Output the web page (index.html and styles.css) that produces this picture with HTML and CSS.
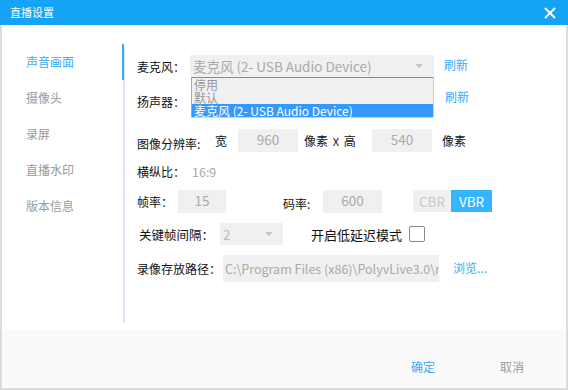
FILE: index.html
```html
<!DOCTYPE html>
<html>
<head>
<meta charset="utf-8">
<link rel="stylesheet" href="styles.css">
</head>
<body>
<div class="window">
  <div class="titlebar">
    <span class="title">直播设置</span>
    <svg class="close" width="12" height="12" viewBox="0 0 12 12"><path d="M1 1L11 11M11 1L1 11" stroke="#fff" stroke-width="2"/></svg>
  </div>
  <div class="main">
    <div class="sidebar">
      <div class="nav active">声音画面</div>
      <div class="nav">摄像头</div>
      <div class="nav">录屏</div>
      <div class="nav">直播水印</div>
      <div class="nav">版本信息</div>
    </div>
    <div class="divider"><div class="indicator"></div></div>
    <div class="content">
      <div class="row r1">
        <span class="lbl w53">麦克风：</span>
        <div class="select mic">
          <span class="sel-text">麦克风 (2- USB Audio Device)</span>
          <span class="arrow"></span>
          <div class="dropdown">
            <div class="opt">停用</div>
            <div class="opt">默认</div>
            <div class="opt on">麦克风 (2- USB Audio Device)</div>
          </div>
        </div>
        <span class="link refresh">刷新</span>
      </div>
      <div class="row r2">
        <span class="lbl w53 spk">扬声器：</span>
        <div class="select-ghost"></div>
        <span class="link refresh2">刷新</span>
      </div>
      <div class="row r3">
        <span class="lbl w78 low">图像分辨率:</span>
        <span class="txt">宽</span>
        <div class="box b960">960</div>
        <span class="txt px">像素 <span class="x">X</span> 高</span>
        <div class="box b540">540</div>
        <span class="txt px2">像素</span>
      </div>
      <div class="row r4">
        <span class="lbl w55">横纵比：</span>
        <span class="gray">16:9</span>
      </div>
      <div class="row r5">
        <span class="lbl w41">帧率：</span>
        <div class="box b15">15</div>
        <span class="lbl w40 rate low">码率:</span>
        <div class="box b600">600</div>
        <div class="toggle">
          <span class="cbr">CBR</span>
          <span class="vbr">VBR</span>
        </div>
      </div>
      <div class="row r6">
        <span class="lbl w83 kf">关键帧间隔：</span>
        <div class="select small">
          <span class="sel-text">2</span>
          <span class="arrow"></span>
        </div>
        <span class="txt lowlat">开启低延迟模式</span>
        <span class="check"></span>
      </div>
      <div class="row r7">
        <span class="lbl w86">录像存放路径：</span>
        <div class="path"><span>C:\Program Files (x86)\PolyvLive3.0\ru</span></div>
        <span class="link browse">浏览...</span>
      </div>
    </div>
  </div>
  <div class="footer">
    <span class="link ok">确定</span>
    <span class="cancel">取消</span>
  </div>
</div>
</body>
</html>
```
FILE: styles.css
```css
* { box-sizing: border-box; }
html, body { margin: 0; padding: 0; }
body {
  width: 568px;
  height: 390px;
  overflow: hidden;
  font-family: "Noto Sans CJK SC", "Noto Sans", sans-serif;
  font-size: 12px;
  color: #111;
  background: #dcdcdc;
}
.window {
  width: 568px;
  height: 390px;
  display: flex;
  flex-direction: column;
}
.titlebar {
  height: 25px;
  background: #14a3f5;
  display: flex;
  align-items: center;
  justify-content: space-between;
  padding: 0 12px 0 10px;
  flex: none;
}
.title { color: #fff; font-size: 11px; line-height: 25px; }
.close { display: block; margin-top: 1px; }
.main {
  height: 305px;
  margin: 0 2px;
  background: #fff;
  display: flex;
  flex: none;
}
.sidebar {
  width: 121px;
  padding-top: 19px;
  flex: none;
}
.nav {
  height: 36px;
  line-height: 36px;
  padding-left: 24px;
  font-size: 12px;
  color: #999;
}
.nav.active { color: #38aaf5; }
.divider {
  position: relative;
  width: 2px;
  margin-top: 22px;
  height: 276px;
  background: #e2e0ff;
  flex: none;
}
.indicator {
  position: absolute;
  left: -1px;
  top: -3px;
  width: 2px;
  height: 36px;
  background: #38a8f2;
}
.content {
  flex: 1;
  padding: 30px 0 0 12px;
}
.row {
  display: flex;
  align-items: center;
  white-space: nowrap;
}
.lbl { flex: none; font-size: 12px; color: #111; }
.w53 { width: 53px; }
.w78 { width: 78px; }
.w55 { width: 55px; }
.w41 { width: 41px; }
.w40 { width: 40px; }
.w83 { width: 83px; }
.w86 { width: 86px; }
.low { padding-top: 5px; }
.r1 { height: 22px; }
.select {
  position: relative;
  height: 22px;
  background: #f0f0f0;
  display: flex;
  align-items: center;
  flex: none;
}
.select.mic { width: 244px; padding-left: 3px; }
.sel-text { color: #aaa; font-size: 13.5px; }
.arrow {
  position: absolute;
  top: 9px;
  right: 11px;
  width: 0; height: 0;
  border-left: 4px solid transparent;
  border-right: 4px solid transparent;
  border-top: 4px solid #c4c4c4;
}
.dropdown {
  position: absolute;
  left: 1px;
  top: 22px;
  width: 243px;
  height: 41px;
  background: #f0f0f0;
  border-top: 1px solid #8a8a8a;
  border-left: 1px solid #a8a8a8;
  border-right: 1px solid #d0d0d0;
  border-bottom: 1px solid #d8d8d8;
  z-index: 2;
}
.opt {
  height: 13px;
  line-height: 13px;
  font-size: 12px;
  color: #999;
  padding-left: 2px;
  overflow: visible;
}
.opt.on {
  background: #3399ff;
  color: #fff;
}
.link { color: #38aaf5; font-size: 12px; }
.refresh { margin-left: 10px; margin-top: -3px; }
.r2 { height: 22px; margin-top: 12px; }
.spk { padding-top: 3px; }
.select-ghost { width: 244px; flex: none; }
.refresh2 { margin-left: 11px; margin-top: -7px; }
.r3 { height: 23px; margin-top: 18px; }
.txt { font-size: 12px; color: #111; }
.box {
  height: 23px;
  background: #f0f0f0;
  color: #aaa;
  font-size: 13.5px;
  text-align: center;
  line-height: 21px;
  flex: none;
}
.b960 { width: 60px; margin-left: 11px; }
.px { margin-left: 6px; width: 68px; }
.x { font-size: 11px; margin: 0 2px; }
.b540 { width: 60px; }
.px2 { margin-left: 10px; }
.r4 { height: 22px; margin-top: 8px; }
.gray { color: #aaa; font-size: 12.5px; }
.r5 { height: 24px; margin-top: 7px; }
.b15 { width: 48px; }
.rate { margin-left: 57px; }
.b600 { width: 59px; }
.toggle { display: flex; margin-left: 31px; height: 22px; }
.cbr, .vbr {
  font-size: 13.5px;
  line-height: 22px;
  text-align: center;
}
.cbr { width: 38px; background: #f0f0f0; color: #c8c8c8; }
.vbr { width: 41px; background: #35b5ff; color: #fff; }
.r6 { height: 22px; margin-top: 10px; }
.kf { padding-left: 2px; font-size: 12.5px; }
.select.small { width: 63px; padding-left: 3px; }
.select.small .sel-text { font-size: 13.5px; color: #bbb; }
.select.small .arrow { right: 10px; }
.lowlat { margin-left: 28px; margin-right: 7px; font-size: 13px; }
.check {
  width: 16px;
  height: 16px;
  border: 1px solid #8a8a8a;
  border-radius: 2px;
  background: #fff;
  flex: none;
}
.r7 { height: 27px; margin-top: 10px; }
.path {
  width: 216px;
  height: 27px;
  background: #f0f0f0;
  overflow: hidden;
  flex: none;
  padding-left: 2px;
  display: flex;
  align-items: center;
}
.path span { color: #aaa; font-size: 12.5px; white-space: nowrap; }
.browse { margin-left: 14px; margin-top: -3px; }
.footer {
  height: 58px;
  margin: 0 2px;
  background: #fafafa;
  display: flex;
  align-items: center;
  padding-left: 409px;
  padding-top: 14px;
  flex: none;
}
.ok { font-size: 12px; }
.cancel { color: #999; font-size: 12px; margin-left: 65px; }
```
